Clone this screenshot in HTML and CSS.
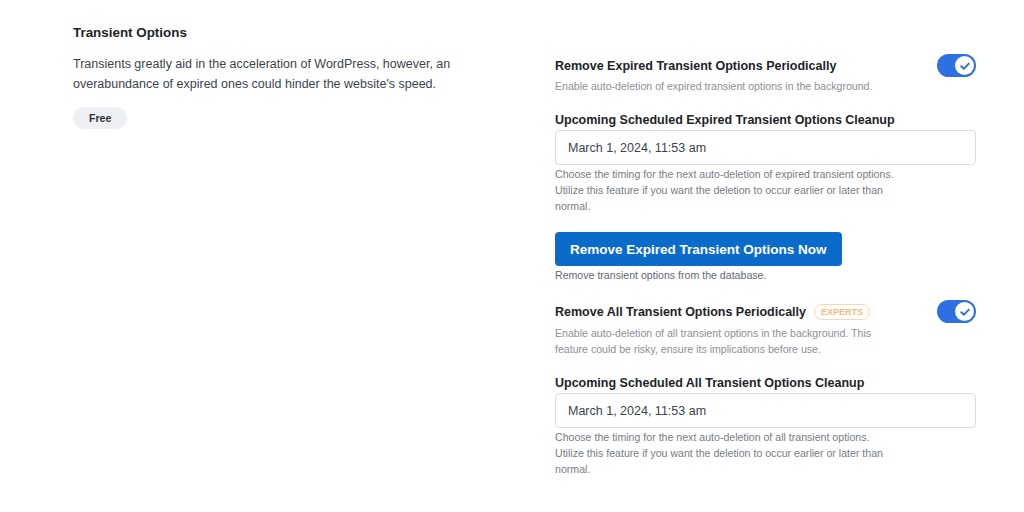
FILE: index.html
```html
<!DOCTYPE html>
<html>
<head>
<meta charset="utf-8">
<link rel="stylesheet" href="styles.css">
</head>
<body>
<div class="page">
  <section class="intro">
    <h2 class="section-title">Transient Options</h2>
    <p class="intro-text">Transients greatly aid in the acceleration of WordPress, however, an overabundance of expired ones could hinder the website's speed.</p>
    <span class="pill">Free</span>
  </section>
  <section class="settings">
    <div class="toggle-row">
      <span class="field-title">Remove Expired Transient Options Periodically</span>
      <span class="toggle"><span class="knob"><svg width="14" height="14" viewBox="0 0 14 14"><path d="M3.2 7.2 L5.9 9.8 L10.8 4.6" fill="none" stroke="#2f6fe4" stroke-width="1.9" stroke-linecap="round" stroke-linejoin="round"/></svg></span></span>
    </div>
    <p class="field-desc">Enable auto-deletion of expired transient options in the background.</p>

    <label class="field-label">Upcoming Scheduled Expired Transient Options Cleanup</label>
    <div class="input">March 1, 2024, 11:53 am</div>
    <p class="help">Choose the timing for the next auto-deletion of expired transient options. Utilize this feature if you want the deletion to occur earlier or later than normal.</p>

    <button class="btn">Remove Expired Transient Options Now</button>
    <p class="btn-desc">Remove transient options from the database.</p>

    <div class="toggle-row second">
      <span class="field-title">Remove All Transient Options Periodically <span class="badge">EXPERTS</span></span>
      <span class="toggle"><span class="knob"><svg width="14" height="14" viewBox="0 0 14 14"><path d="M3.2 7.2 L5.9 9.8 L10.8 4.6" fill="none" stroke="#2f6fe4" stroke-width="1.9" stroke-linecap="round" stroke-linejoin="round"/></svg></span></span>
    </div>
    <p class="field-desc two">Enable auto-deletion of all transient options in the background. This feature could be risky, ensure its implications before use.</p>

    <label class="field-label">Upcoming Scheduled All Transient Options Cleanup</label>
    <div class="input">March 1, 2024, 11:53 am</div>
    <p class="help">Choose the timing for the next auto-deletion of all transient options. Utilize this feature if you want the deletion to occur earlier or later than normal.</p>
  </section>
</div>
</body>
</html>
```
FILE: styles.css
```css
* { box-sizing: border-box; }
html, body { margin: 0; padding: 0; background: #fff; }
body { font-family: "Liberation Sans", Arial, sans-serif; color: #1d2327; }
.page {
  display: grid;
  grid-template-columns: 482px 421px;
  padding-left: 73px;
  padding-top: 23px;
}
.section-title {
  margin: 0;
  font-size: 13.4px;
  line-height: 20px;
  font-weight: bold;
  color: #1d2327;
}
.intro-text {
  margin: 12px 0 0;
  font-size: 12.5px;
  line-height: 19.5px;
  color: #3c434a;
  max-width: 392px;
}
.pill {
  display: inline-block;
  margin-top: 13px;
  height: 22px;
  line-height: 22px;
  padding: 0 16px;
  border-radius: 11px;
  background: #edeff3;
  color: #2c3338;
  font-size: 10.6px;
  font-weight: bold;
}
.settings {
  padding-top: 31px;
  display: flex;
  flex-direction: column;
  align-items: flex-start;
}
.toggle-row {
  width: 100%;
  display: flex;
  align-items: center;
  justify-content: space-between;
  height: 23px;
}
.toggle-row.second { margin-top: 17px; }
.field-title {
  font-size: 12.5px;
  font-weight: bold;
  line-height: 16px;
  color: #1d2327;
  display: flex;
  align-items: center;
}
.badge {
  display: inline-block;
  margin-left: 8px;
  height: 16px;
  line-height: 14px;
  padding: 0 6px;
  border: 1px solid #fdd5ae;
  border-radius: 8px;
  color: #f9b97c;
  font-size: 9px;
  font-weight: bold;
}
.toggle {
  width: 39px;
  height: 23px;
  border-radius: 12px;
  background: #2f6fe4;
  display: flex;
  align-items: center;
  justify-content: flex-end;
  padding-right: 2px;
}
.knob {
  width: 19px;
  height: 19px;
  border-radius: 50%;
  background: #fff;
  display: flex;
  align-items: center;
  justify-content: center;
}
.field-desc {
  margin: 1px 0 0;
  font-size: 10.6px;
  line-height: 16px;
  color: #8c8f94;
  max-width: 340px;
}
.field-desc.two { margin-top: 2px; }
.field-label {
  display: block;
  margin-top: 18px;
  font-size: 12.5px;
  font-weight: bold;
  line-height: 16px;
  color: #1d2327;
}
.input {
  width: 100%;
  margin-top: 2px;
  height: 35px;
  border: 1px solid #dcdcde;
  border-radius: 4px;
  padding: 0 12px;
  display: flex;
  align-items: center;
  font-size: 12.5px;
  color: #3c434a;
}
.help {
  margin: 1px 0 0;
  font-size: 10.6px;
  line-height: 16px;
  color: #787c82;
  max-width: 345px;
}
.btn {
  margin-top: 18px;
  height: 34px;
  padding: 0 15px;
  border: none;
  border-radius: 4px;
  background: #0b6bcb;
  color: #fff;
  font-family: "Liberation Sans", Arial, sans-serif;
  font-size: 13.5px;
  font-weight: bold;
  cursor: pointer;
}
.btn-desc {
  margin: 1px 0 0;
  font-size: 10.6px;
  line-height: 16px;
  color: #646970;
}
```
